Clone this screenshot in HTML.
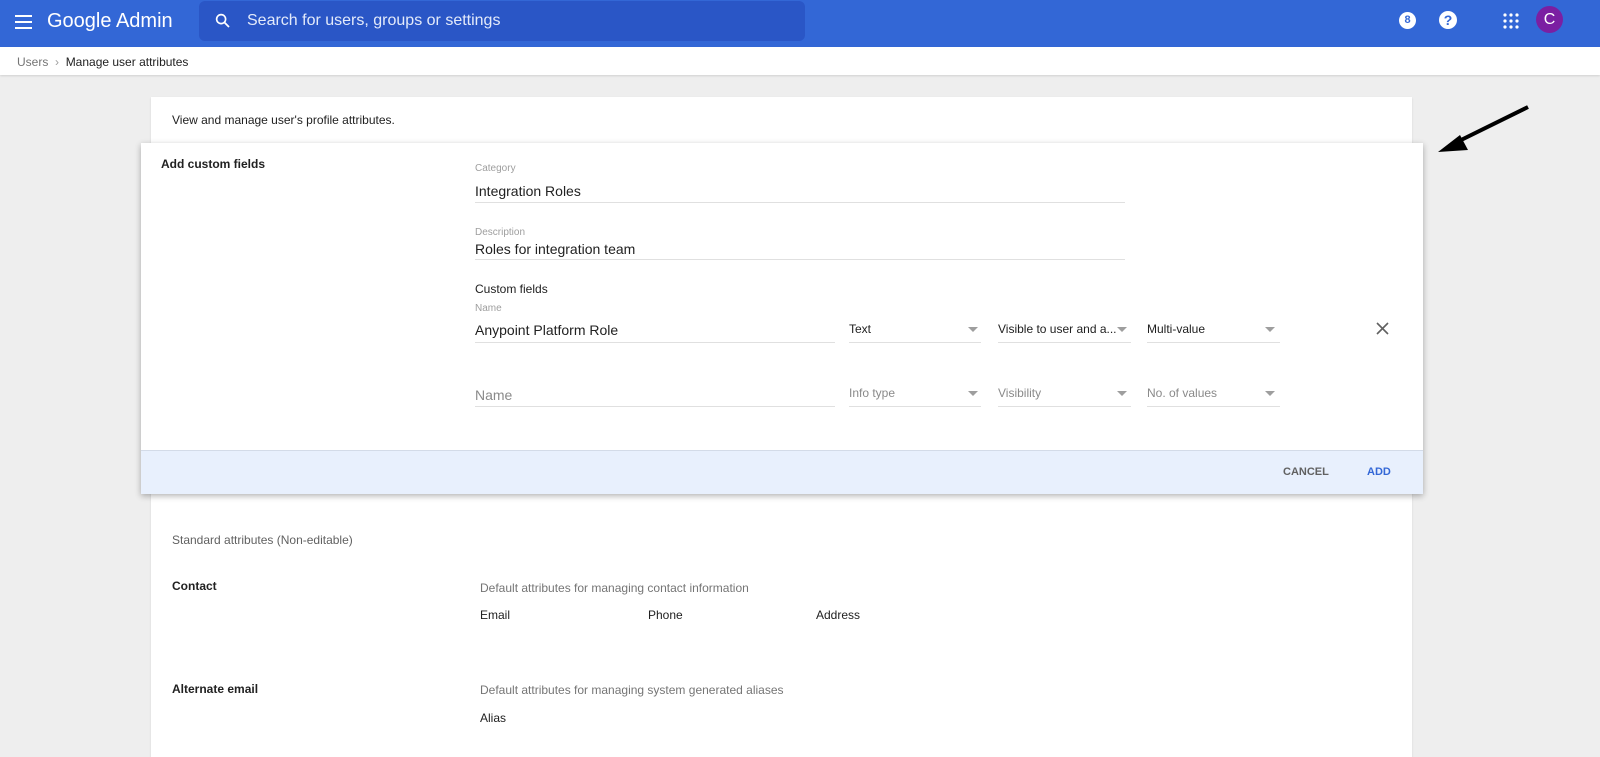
<!DOCTYPE html>
<html><head><meta charset="utf-8"><style>
*{box-sizing:border-box;margin:0;padding:0}
body{width:1600px;height:748px;overflow:hidden;background:#eeeeee;font-family:"Liberation Sans",Arial,sans-serif;position:relative;color:#212121}
.a{position:absolute;white-space:nowrap}
.hdr{left:0;top:0;width:1600px;height:47px;background:#3367d6}
.bc{left:0;top:47px;width:1600px;height:28px;background:#fff;box-shadow:0 1px 2px rgba(0,0,0,.12)}
.card{left:151px;top:97px;width:1261px;height:660px;background:#fff;box-shadow:0 1px 2px rgba(0,0,0,.1)}
.modal{left:141px;top:143px;width:1282px;height:351px;background:#fff;box-shadow:0 2px 6px rgba(0,0,0,.3)}
.foot{left:141px;top:450px;width:1282px;height:44px;background:#e8f0fd;border-top:1px solid #d3dbe8}
.line{height:1px;background:#e0e0e0}
.lbl{font-size:10px;color:#9e9e9e}
.val{font-size:14px;color:#212121}
.sel{font-size:12px;color:#212121}
.ph{font-size:12px;color:#8a8a8a}
.tri{width:0;height:0;border-left:5px solid transparent;border-right:5px solid transparent;border-top:5px solid #9e9e9e}
.t12{font-size:12px}
</style></head><body>
<div class="a hdr"></div>
<div class="a" style="left:15px;top:15px;width:17px;height:2px;background:#fff;box-shadow:0 6px 0 #fff,0 12px 0 #fff"></div>
<div class="a" style="left:47px;top:10px;font-size:20px;color:#fff">Google Admin</div>
<div class="a" style="left:199px;top:1px;width:606px;height:40px;background:#2a56c6;border-radius:6px"></div>
<svg class="a" style="left:214px;top:12px" width="18" height="18" viewBox="0 0 24 24"><circle cx="9.5" cy="9.5" r="6" fill="none" stroke="#fff" stroke-width="2.2"/><path d="M14 14l6 6" stroke="#fff" stroke-width="2.4"/></svg>
<div class="a" style="left:247px;top:12px;font-size:16px;color:#e3eafa">Search for users, groups or settings</div>
<div class="a" style="left:1399px;top:12px;width:17px;height:17px;border-radius:50%;background:#fff;color:#3367d6;font-size:11px;font-weight:bold;text-align:center;line-height:17px">8</div>
<div class="a" style="left:1439px;top:11px;width:18px;height:18px;border-radius:50%;background:#fff;color:#3367d6;font-size:14px;font-weight:bold;text-align:center;line-height:18px">?</div>
<svg class="a" style="left:1503px;top:13px" width="16" height="16" viewBox="0 0 16 16" fill="#fff"><circle cx="2" cy="2" r="1.6"/><circle cx="8" cy="2" r="1.6"/><circle cx="14" cy="2" r="1.6"/><circle cx="2" cy="8" r="1.6"/><circle cx="8" cy="8" r="1.6"/><circle cx="14" cy="8" r="1.6"/><circle cx="2" cy="14" r="1.6"/><circle cx="8" cy="14" r="1.6"/><circle cx="14" cy="14" r="1.6"/></svg>
<div class="a" style="left:1536px;top:6px;width:27px;height:27px;border-radius:50%;background:#7b1fa2;color:#fff;font-size:16px;text-align:center;line-height:27px">C</div>
<div class="a bc"></div>
<div class="a" style="left:17px;top:55px;font-size:12px;color:#757575">Users&nbsp;&nbsp;<span style="color:#9e9e9e">›</span>&nbsp;&nbsp;<span style="color:#212121">Manage user attributes</span></div>
<div class="a card"></div>
<div class="a t12" style="left:172px;top:113px">View and manage user's profile attributes.</div>
<div class="a t12" style="left:172px;top:533px;color:#616161">Standard attributes (Non-editable)</div>
<div class="a t12" style="left:172px;top:579px;font-weight:bold;font-weight:600">Contact</div>
<div class="a t12" style="left:480px;top:581px;color:#757575">Default attributes for managing contact information</div>
<div class="a t12" style="left:480px;top:608px">Email</div>
<div class="a t12" style="left:648px;top:608px">Phone</div>
<div class="a t12" style="left:816px;top:608px">Address</div>
<div class="a t12" style="left:172px;top:682px;font-weight:600">Alternate email</div>
<div class="a t12" style="left:480px;top:683px;color:#757575">Default attributes for managing system generated aliases</div>
<div class="a t12" style="left:480px;top:711px">Alias</div>
<div class="a modal"></div>
<div class="a foot"></div>
<div class="a t12" style="left:161px;top:157px;font-weight:600">Add custom fields</div>
<div class="a lbl" style="left:475px;top:163px">Category</div>
<div class="a val" style="left:475px;top:183px">Integration Roles</div>
<div class="a line" style="left:475px;top:202px;width:650px"></div>
<div class="a lbl" style="left:475px;top:227px">Description</div>
<div class="a val" style="left:475px;top:241px">Roles for integration team</div>
<div class="a line" style="left:475px;top:259px;width:650px"></div>
<div class="a t12" style="left:475px;top:282px">Custom fields</div>
<div class="a lbl" style="left:475px;top:303px">Name</div>
<div class="a val" style="left:475px;top:322px">Anypoint Platform Role</div>
<div class="a line" style="left:475px;top:342px;width:360px"></div>
<div class="a sel" style="left:849px;top:322px">Text</div><div class="a tri" style="left:968px;top:327px"></div><div class="a line" style="left:849px;top:342px;width:132px"></div>
<div class="a sel" style="left:998px;top:322px">Visible to user and a...</div><div class="a tri" style="left:1117px;top:327px"></div><div class="a line" style="left:998px;top:342px;width:133px"></div>
<div class="a sel" style="left:1147px;top:322px">Multi-value</div><div class="a tri" style="left:1265px;top:327px"></div><div class="a line" style="left:1147px;top:342px;width:133px"></div>
<svg class="a" style="left:1376px;top:322px" width="13" height="13" viewBox="0 0 13 13"><path d="M1 1l11 11M12 1L1 12" stroke="#616161" stroke-width="1.6"/></svg>
<div class="a" style="left:475px;top:387px;font-size:14px;color:#8a8a8a">Name</div>
<div class="a line" style="left:475px;top:406px;width:360px"></div>
<div class="a ph" style="left:849px;top:386px">Info type</div><div class="a tri" style="left:968px;top:391px"></div><div class="a line" style="left:849px;top:406px;width:132px"></div>
<div class="a ph" style="left:998px;top:386px">Visibility</div><div class="a tri" style="left:1117px;top:391px"></div><div class="a line" style="left:998px;top:406px;width:133px"></div>
<div class="a ph" style="left:1147px;top:386px">No. of values</div><div class="a tri" style="left:1265px;top:391px"></div><div class="a line" style="left:1147px;top:406px;width:133px"></div>
<div class="a" style="left:1283px;top:466px;font-size:11px;color:#616161;font-weight:600">CANCEL</div>
<div class="a" style="left:1367px;top:466px;font-size:11px;color:#3367d6;font-weight:bold">ADD</div>
<svg class="a" style="left:1430px;top:100px" width="105" height="55" viewBox="0 0 105 55"><path d="M98 7L25 43" stroke="#000" stroke-width="4"/><path d="M8 52L30 35L38 50Z" fill="#000"/></svg>
</body></html>
